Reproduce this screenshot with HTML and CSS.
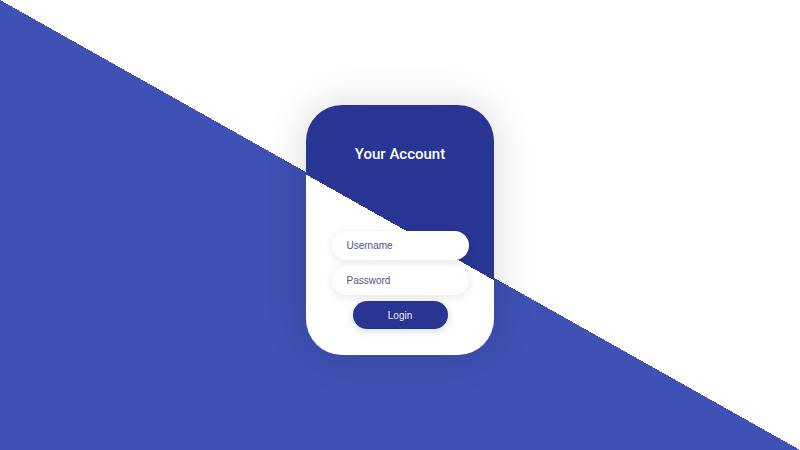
FILE: index.html
```html
<!DOCTYPE html>
<html lang="en">
<head>
<meta charset="utf-8">
<title>Your Account</title>
<link rel="stylesheet" href="styles.css">
</head>
<body>
<main class="stage">
  <section class="card">
    <h1 class="card-title">Your Account</h1>
    <form class="login-form">
      <input class="field" type="text" placeholder="Username">
      <input class="field" type="password" placeholder="Password">
      <button class="login-btn" type="button">Login</button>
    </form>
  </section>
</main>
</body>
</html>
```
FILE: styles.css
```css
html, body {
  margin: 0;
  padding: 0;
  height: 100%;
}
body {
  background: linear-gradient(to bottom left, #ffffff 50%, #3f51b5 50%) fixed;
  font-family: "Liberation Sans", Arial, sans-serif;
  overflow: hidden;
}
.stage {
  height: 100%;
  box-sizing: border-box;
  padding-top: 10px;
  display: flex;
  align-items: center;
  justify-content: center;
}
.card {
  width: 188px;
  height: 250px;
  box-sizing: border-box;
  border-radius: 36px;
  background: linear-gradient(to bottom left, #283593 calc(50% + 2px), #ffffff calc(50% + 2px)) fixed;
  box-shadow: 0 0 40px rgba(0, 0, 0, 0.16);
  display: flex;
  flex-direction: column;
  align-items: center;
  padding: 39px 0 26px;
}
.card-title {
  margin: 0;
  font-family: Roboto, "Liberation Sans", sans-serif;
  font-weight: 500;
  font-size: 15px;
  line-height: 20px;
  color: #ffffff;
}
.login-form {
  margin-top: auto;
  display: flex;
  flex-direction: column;
  align-items: center;
  gap: 6px;
}
.field {
  width: 137px;
  height: 29px;
  box-sizing: border-box;
  border: none;
  outline: none;
  border-radius: 15px;
  background: #ffffff;
  padding: 0 15px;
  font-family: "Liberation Sans", Arial, sans-serif;
  font-size: 10px;
  color: #4b5394;
  box-shadow: 0 2px 8px rgba(0, 0, 0, 0.1);
}
.field::placeholder {
  color: #4b5394;
  opacity: 1;
}
.login-btn {
  width: 95px;
  height: 28px;
  border: none;
  border-radius: 14px;
  background: #283593;
  color: #e8eaf6;
  font-family: "Liberation Sans", Arial, sans-serif;
  font-size: 10px;
  box-shadow: 0 2px 8px rgba(0, 0, 0, 0.15);
  cursor: pointer;
}
```
